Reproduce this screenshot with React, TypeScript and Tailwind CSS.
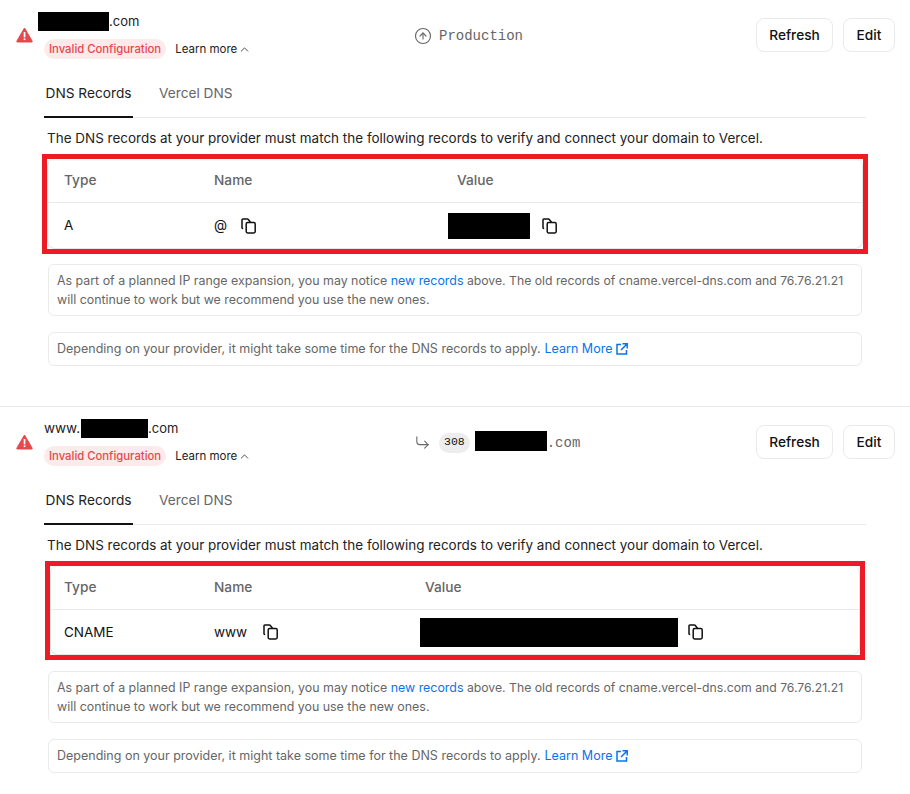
import { ChevronUp, CircleArrowUp, CornerDownRight } from "lucide-react";
import type { ReactNode } from "react";

function AlertIcon() {
  return (
    <svg width="17" height="16" viewBox="0 0 17 16" className="shrink-0">
      <path d="M8.5 1 L16.2 14.2 A0.6 0.6 0 0 1 15.7 15 H1.3 A0.6 0.6 0 0 1 0.8 14.2 Z" fill="#e5484d" stroke="#e5484d" strokeLinejoin="round" />
      <rect x="7.7" y="5" width="1.7" height="5.4" fill="#fff" />
      <rect x="7.7" y="11.4" width="1.7" height="1.7" fill="#fff" />
    </svg>
  );
}

function CopyIcon() {
  return (
    <svg width="16" height="16" viewBox="0 0 16 16" fill="none" stroke="#111" strokeWidth="1.5" className="shrink-0">
      <path d="M2.2 10.5 H1.8 A0.8 0.8 0 0 1 1 9.7 V1.8 A0.8 0.8 0 0 1 1.8 1 H6.5 A0.8 0.8 0 0 1 7.1 1.3 L9.5 4.2" />
      <rect x="5.2" y="4.6" width="9" height="10.4" rx="1.4" />
    </svg>
  );
}

function ExternalIcon() {
  return (
    <svg width="12" height="12" viewBox="0 0 12 12" fill="none" stroke="#0a72ef" strokeWidth="1.5" className="ml-1 inline-block shrink-0">
      <path d="M5 1.5 H1 V11 H10.5 V7" />
      <path d="M6.5 0.8 H11.2 V5.5 M11 1 L5 7" />
    </svg>
  );
}

function Redacted({ className }: { className: string }) {
  return <span className={`inline-block bg-black ${className}`} />;
}

interface SectionProps {
  domain: ReactNode;
  target: ReactNode;
  recordType: string;
  recordName: string;
  nameGap: string;
  valueCol: string;
  valueRedacted: string;
  copyGap: string;
  boxClass: string;
  rowPad: string;
  rowHeight: string;
  last?: boolean;
}

function Section({ domain, target, recordType, recordName, nameGap, valueCol, valueRedacted, copyGap, boxClass, rowPad, rowHeight, last }: SectionProps) {
  return (
    <section className={`h-[407px] ${last ? "" : "border-b border-[#eaeaea]"}`}>
      {/* header */}
      <div className="flex h-[70px] pl-4 pr-[15px]">
        <div className="flex w-[399px] shrink-0 pt-[12px]">
          <div className="w-7 shrink-0 pt-[15px]">
            <AlertIcon />
          </div>
          <div>
            <div className="flex h-[19px] items-center text-[13.5px] text-[#222]">{domain}</div>
            <div className="mt-[8px] flex items-center">
              <span className="flex h-5 items-center rounded-full bg-[#fdeaea] px-[5px] pt-px text-[11.3px] font-medium whitespace-nowrap text-[#e5484d]">
                Invalid Configuration
              </span>
              <span className="ml-[9px] flex items-center pt-px text-[11.5px] text-[#222]">
                Learn more
                <ChevronUp size={13} strokeWidth={1.5} className="ml-px" />
              </span>
            </div>
          </div>
        </div>
        <div className="flex flex-1 items-center pt-px">{target}</div>
        <div className="flex gap-[10px] pt-[18px]">
          <button className="h-[34px] w-[77px] rounded-lg border border-[#eaeaea] bg-white text-[13.7px] font-medium text-[#111]">Refresh</button>
          <button className="h-[34px] w-[52px] rounded-lg border border-[#eaeaea] bg-white text-[13.7px] font-medium text-[#111]">Edit</button>
        </div>
      </div>

      {/* tabs */}
      <div className="mx-11 flex h-[48px] items-stretch border-b border-[#eaeaea] text-[13.7px]">
        <div className="-mb-px flex w-[89px] items-center justify-center border-b-2 border-[#111] text-[#222]">DNS Records</div>
        <div className="ml-[26px] flex items-center text-[#666]">Vercel DNS</div>
      </div>

      <p className="mt-[11px] ml-[47px] text-[13.48px] leading-[18px] text-[#222]">
        The DNS records at your provider must match the following records to verify and connect your domain to Vercel.
      </p>

      {/* table with the red highlight round it */}
      <div className={`mt-[7px] border-[5px] border-[#ed1c24] ${boxClass}`}>
        <div className="rounded-lg border-x border-b border-[#e5e5e5] bg-white text-[13.7px]">
          <div className={`flex h-[44px] items-center border-b border-[#eaeaea] font-medium text-[#666] ${rowPad}`}>
            <div className="w-[150px]">Type</div>
            <div className={valueCol}>Name</div>
            <div>Value</div>
          </div>
          <div className={`flex items-center text-[13.5px] text-[#111] ${rowHeight} ${rowPad}`}>
            <div className="w-[150px]">{recordType}</div>
            <div className={`flex items-center ${valueCol} ${nameGap}`}>
              <span>{recordName}</span>
              <CopyIcon />
            </div>
            <Redacted className={valueRedacted} />
            <span className={copyGap}>
              <CopyIcon />
            </span>
          </div>
        </div>
      </div>

      {/* notes */}
      <div className="mx-12 rounded-md border border-[#eaeaea] px-2 py-[6px] text-[12.4px] leading-[19px] whitespace-nowrap text-[#666]">
        <div>
          As part of a planned IP range expansion, you may notice <span className="text-[#0a72ef]">new records</span>
          <span className="text-[12.22px]"> above. The old records of cname.vercel-dns.com and 76.76.21.21</span>
        </div>
        <div>will continue to work but we recommend you use the new ones.</div>
      </div>
      <div className="mx-12 mt-4 flex h-[34px] items-center rounded-md border border-[#eaeaea] px-2 text-[12.5px] text-[#666]">
        Depending on your provider, it might take some time for the DNS records to apply.
        <span className="ml-1 text-[#0a72ef]">Learn More</span>
        <ExternalIcon />
      </div>
    </section>
  );
}

export default function App() {
  return (
    <div className="h-[794px] w-[910px] overflow-hidden bg-white font-['Inter',sans-serif]">
      <Section
        domain={
          <>
            <Redacted className="-ml-1.5 h-[19px] w-[71px]" />
            <span className="text-[13px]">.com</span>
          </>
        }
        target={
          <div className="flex items-center font-['Liberation_Mono',monospace] text-sm text-[#666]">
            <CircleArrowUp size={18} strokeWidth={1.5} className="mr-[7px] -ml-px" />
            Production
          </div>
        }
        recordType="A"
        recordName="@"
        nameGap="gap-[14px]"
        valueCol="w-[243px]"
        valueRedacted="-ml-[9px] h-[26px] w-[82px]"
        copyGap="ml-3"
        boxClass="mx-[42px] mb-[10px] h-[100px]"
        rowPad="pl-[16px]"
        rowHeight="h-[45px]"
      />
      <Section
        domain={
          <>
            www.
            <Redacted className="ml-px h-[19px] w-[67px]" />
            <span className="text-[13px]">.com</span>
          </>
        }
        target={
          <div className="flex items-center font-['Liberation_Mono',monospace] text-sm text-[#666]">
            <CornerDownRight size={17} strokeWidth={1.5} className="mr-2 -ml-px" />
            <span className="flex h-5 items-center rounded-full bg-[#ededed] px-[5px] text-[11.5px] text-[#111]">308</span>
            <Redacted className="mb-[4px] ml-[5px] h-5 w-[72px]" />
            .com
          </div>
        }
        recordType="CNAME"
        recordName="www"
        nameGap="gap-[16px]"
        valueCol="w-[211px]"
        valueRedacted="-ml-[5px] h-[29px] w-[258px]"
        copyGap="ml-[10px]"
        boxClass="mx-[45px] mb-[11px] h-[99px]"
        rowPad="pl-[13px]"
        rowHeight="h-[44px]"
        last
      />
    </div>
  );
}
